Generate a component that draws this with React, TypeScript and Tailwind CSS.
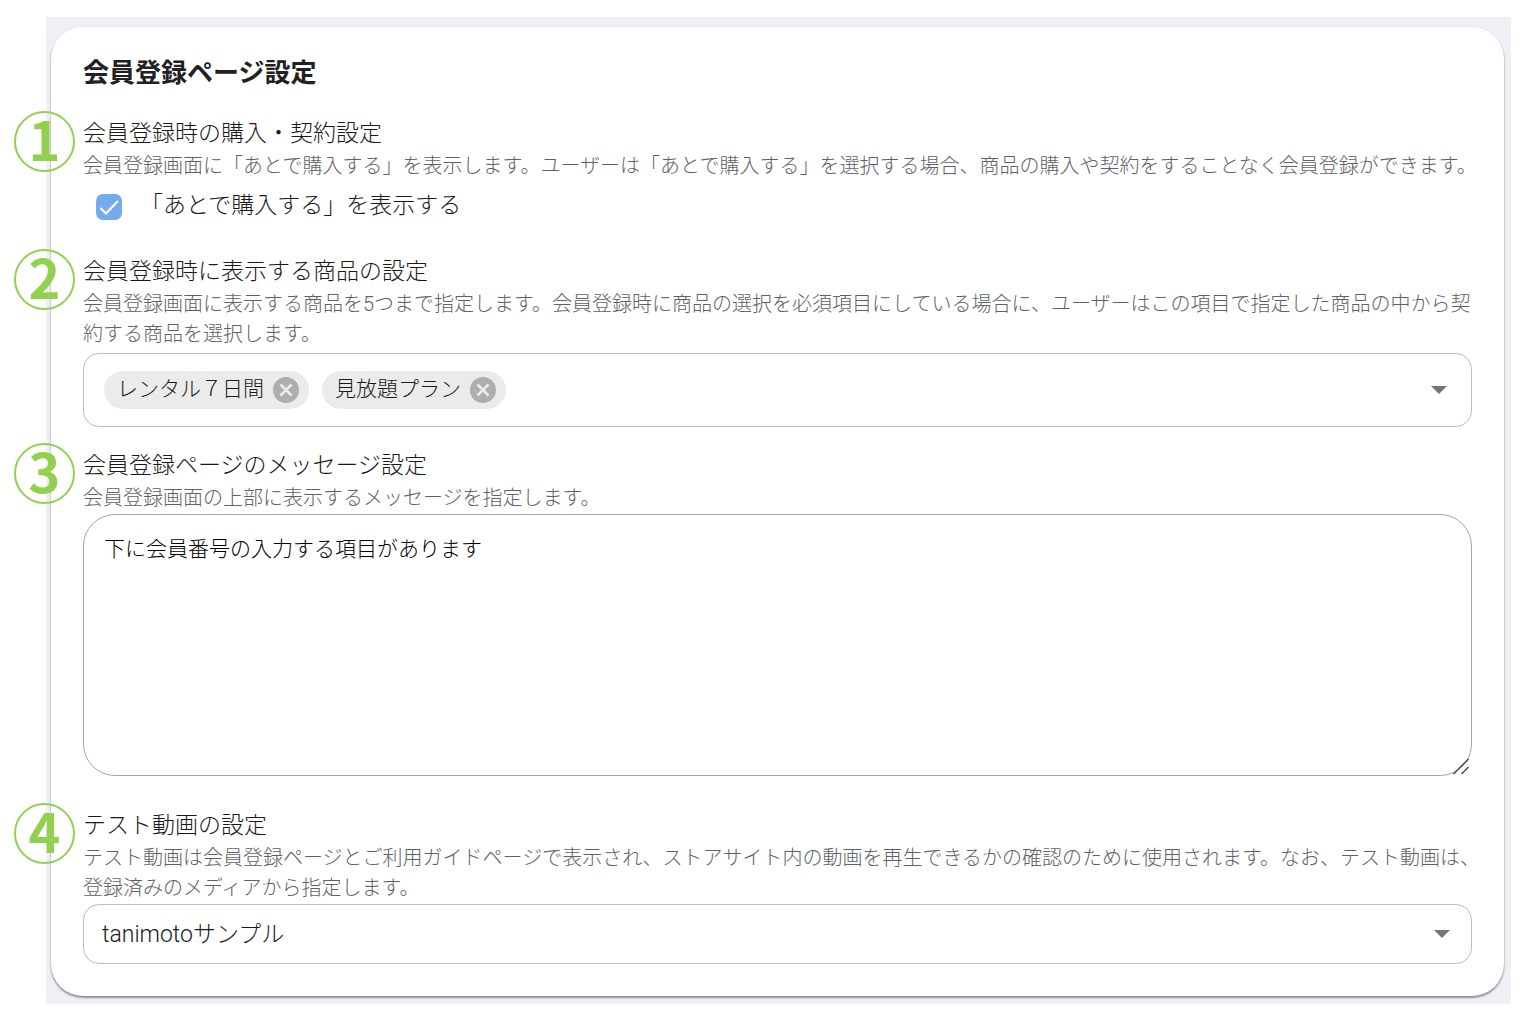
import { useState } from 'react';
import type { ReactNode } from 'react';

interface SettingSectionProps {
  step: number;
  id: string;
  title: string;
  description: string;
  className?: string;
  children: ReactNode;
}

function SettingSection({ step, id, title, description, className = '', children }: SettingSectionProps) {
  return (
    <section className={`relative ${className}`} aria-labelledby={id}>
      <span className="absolute -top-[4px] -left-[69px] flex size-[61px] items-center justify-center rounded-full border-2 border-[#92d050] pb-2 text-[54px] leading-none font-bold text-[#92d050] font-['Noto_Sans_CJK_JP',sans-serif]">
        {step}
      </span>
      <h2 id={id} className="pt-0.5 text-[23px] leading-[34px] text-[#1a1a1a]">
        {title}
      </h2>
      <p className="-mr-3 text-[20px] leading-[30px] text-[#5f6166]">{description}</p>
      {children}
    </section>
  );
}

function ArrowDown() {
  return (
    <svg viewBox="0 0 16 8" className="h-2 w-4" aria-hidden="true">
      <path d="M0 0h16L8 8z" fill="#757575" />
    </svg>
  );
}

function ProductChip({ label, onRemove }: { label: string; onRemove: () => void }) {
  return (
    <span className="flex h-[38px] items-center gap-[9px] rounded-full bg-[#ebebeb] pr-[10px] pl-[13px] text-[21px] leading-[34px] text-[#1a1a1a]">
      <span className="pb-0.5">{label}</span>
      <button type="button" aria-label={`${label}を削除`} onClick={onRemove} className="size-[26px]">
        <svg viewBox="0 0 26 26" className="size-[26px]" aria-hidden="true">
          <circle cx="13" cy="13" r="13" fill="#aeaeae" />
          <path d="M7.500 7.500l11 11M18.500 7.500l-11 11" stroke="#ebebeb" strokeWidth="2.600" />
        </svg>
      </button>
    </span>
  );
}

export default function App() {
  const [showLater, setShowLater] = useState(true);
  const [products, setProducts] = useState(['レンタル７日間', '見放題プラン']);
  const [message, setMessage] = useState('下に会員番号の入力する項目があります');

  return (
    <div lang="ja" className="bg-white pt-[17px] pr-[9px] pb-[11px] pl-[46px] font-light font-[Roboto,'Noto_Sans_CJK_JP',sans-serif]">
      <main className="bg-[#eff0f5] pt-[10px] pr-[7px] pb-2 pl-[5px]">
        <div className="rounded-[32px] bg-white px-8 pt-[29px] pb-8 shadow-[0_2px_2px_rgba(0,0,0,0.35),0_1px_3px_rgba(0,0,0,0.12)]">
          <h1 className="text-[26px] leading-[34px] font-bold text-[#212121]">会員登録ページ設定</h1>

          <SettingSection
            step={1}
            id="purchase"
            className="mt-[25px]"
            title="会員登録時の購入・契約設定"
            description="会員登録画面に「あとで購入する」を表示します。ユーザーは「あとで購入する」を選択する場合、商品の購入や契約をすることなく会員登録ができます。"
          >
            <label className="flex h-12 w-fit items-center pl-[13px] text-[23px] leading-[34px] text-[#1a1a1a]">
              <span className="relative mt-1 size-[26px]">
                <input
                  type="checkbox"
                  checked={showLater}
                  onChange={(e) => setShowLater(e.target.checked)}
                  className="peer block size-[26px] appearance-none rounded-[7px] border border-[#bdbdbd] checked:border-0 checked:bg-[#75abee]"
                />
                <svg viewBox="0 0 26 26" className="pointer-events-none absolute inset-0 hidden size-[26px] peer-checked:block" aria-hidden="true">
                  <path d="M4.500 14l5.500 5.500L22 7" fill="none" stroke="#fff" strokeWidth="2.200" />
                </svg>
              </span>
              <span className="ml-[18px] pt-0.5">「あとで購入する」を表示する</span>
            </label>
          </SettingSection>

          <SettingSection
            step={2}
            id="products"
            className="mt-6"
            title="会員登録時に表示する商品の設定"
            description="会員登録画面に表示する商品を5つまで指定します。会員登録時に商品の選択を必須項目にしている場合に、ユーザーはこの項目で指定した商品の中から契約する商品を選択します。"
          >
            <div className="mt-1 flex h-[74px] items-center rounded-2xl border border-[#bdbdbd] pr-6 pl-5">
              <div className="flex flex-1 gap-[13px]">
                {products.map((p) => (
                  <ProductChip key={p} label={p} onRemove={() => setProducts(products.filter((x) => x !== p))} />
                ))}
              </div>
              <button type="button" aria-label="商品を選択">
                <ArrowDown />
              </button>
            </div>
          </SettingSection>

          <SettingSection
            step={3}
            id="message"
            className="mt-5"
            title="会員登録ページのメッセージ設定"
            description="会員登録画面の上部に表示するメッセージを指定します。"
          >
            <div className="relative mt-px">
              <textarea
                aria-labelledby="message"
                value={message}
                onChange={(e) => setMessage(e.target.value)}
                className="block h-[262px] w-full resize-y rounded-[32px] border border-[#a6a6a6] px-5 py-[17px] text-[21px] leading-[34px] text-black outline-none [&::-webkit-resizer]:hidden"
              />
              <svg viewBox="0 0 18 18" className="pointer-events-none absolute right-[2px] bottom-[1px] size-[18px]" aria-hidden="true">
                <path d="M1.500 17L16.500 2M9.500 17l7-7" stroke="#4a4a4a" strokeWidth="1.500" />
              </svg>
            </div>
          </SettingSection>

          <SettingSection
            step={4}
            id="video"
            className="mt-[31px]"
            title="テスト動画の設定"
            description="テスト動画は会員登録ページとご利用ガイドページで表示され、ストアサイト内の動画を再生できるかの確認のために使用されます。なお、テスト動画は、登録済みのメディアから指定します。"
          >
            <div className="relative mt-px">
              <select
                aria-labelledby="video"
                className="block h-[60px] w-full appearance-none rounded-2xl border border-[#bdbdbd] bg-white pt-0.5 pr-12 pl-[18px] text-[23px] leading-[34px] text-[#1a1a1a]"
              >
                <option>tanimotoサンプル</option>
              </select>
              <span className="pointer-events-none absolute inset-y-0 right-[22px] flex items-center">
                <ArrowDown />
              </span>
            </div>
          </SettingSection>
        </div>
      </main>
    </div>
  );
}
